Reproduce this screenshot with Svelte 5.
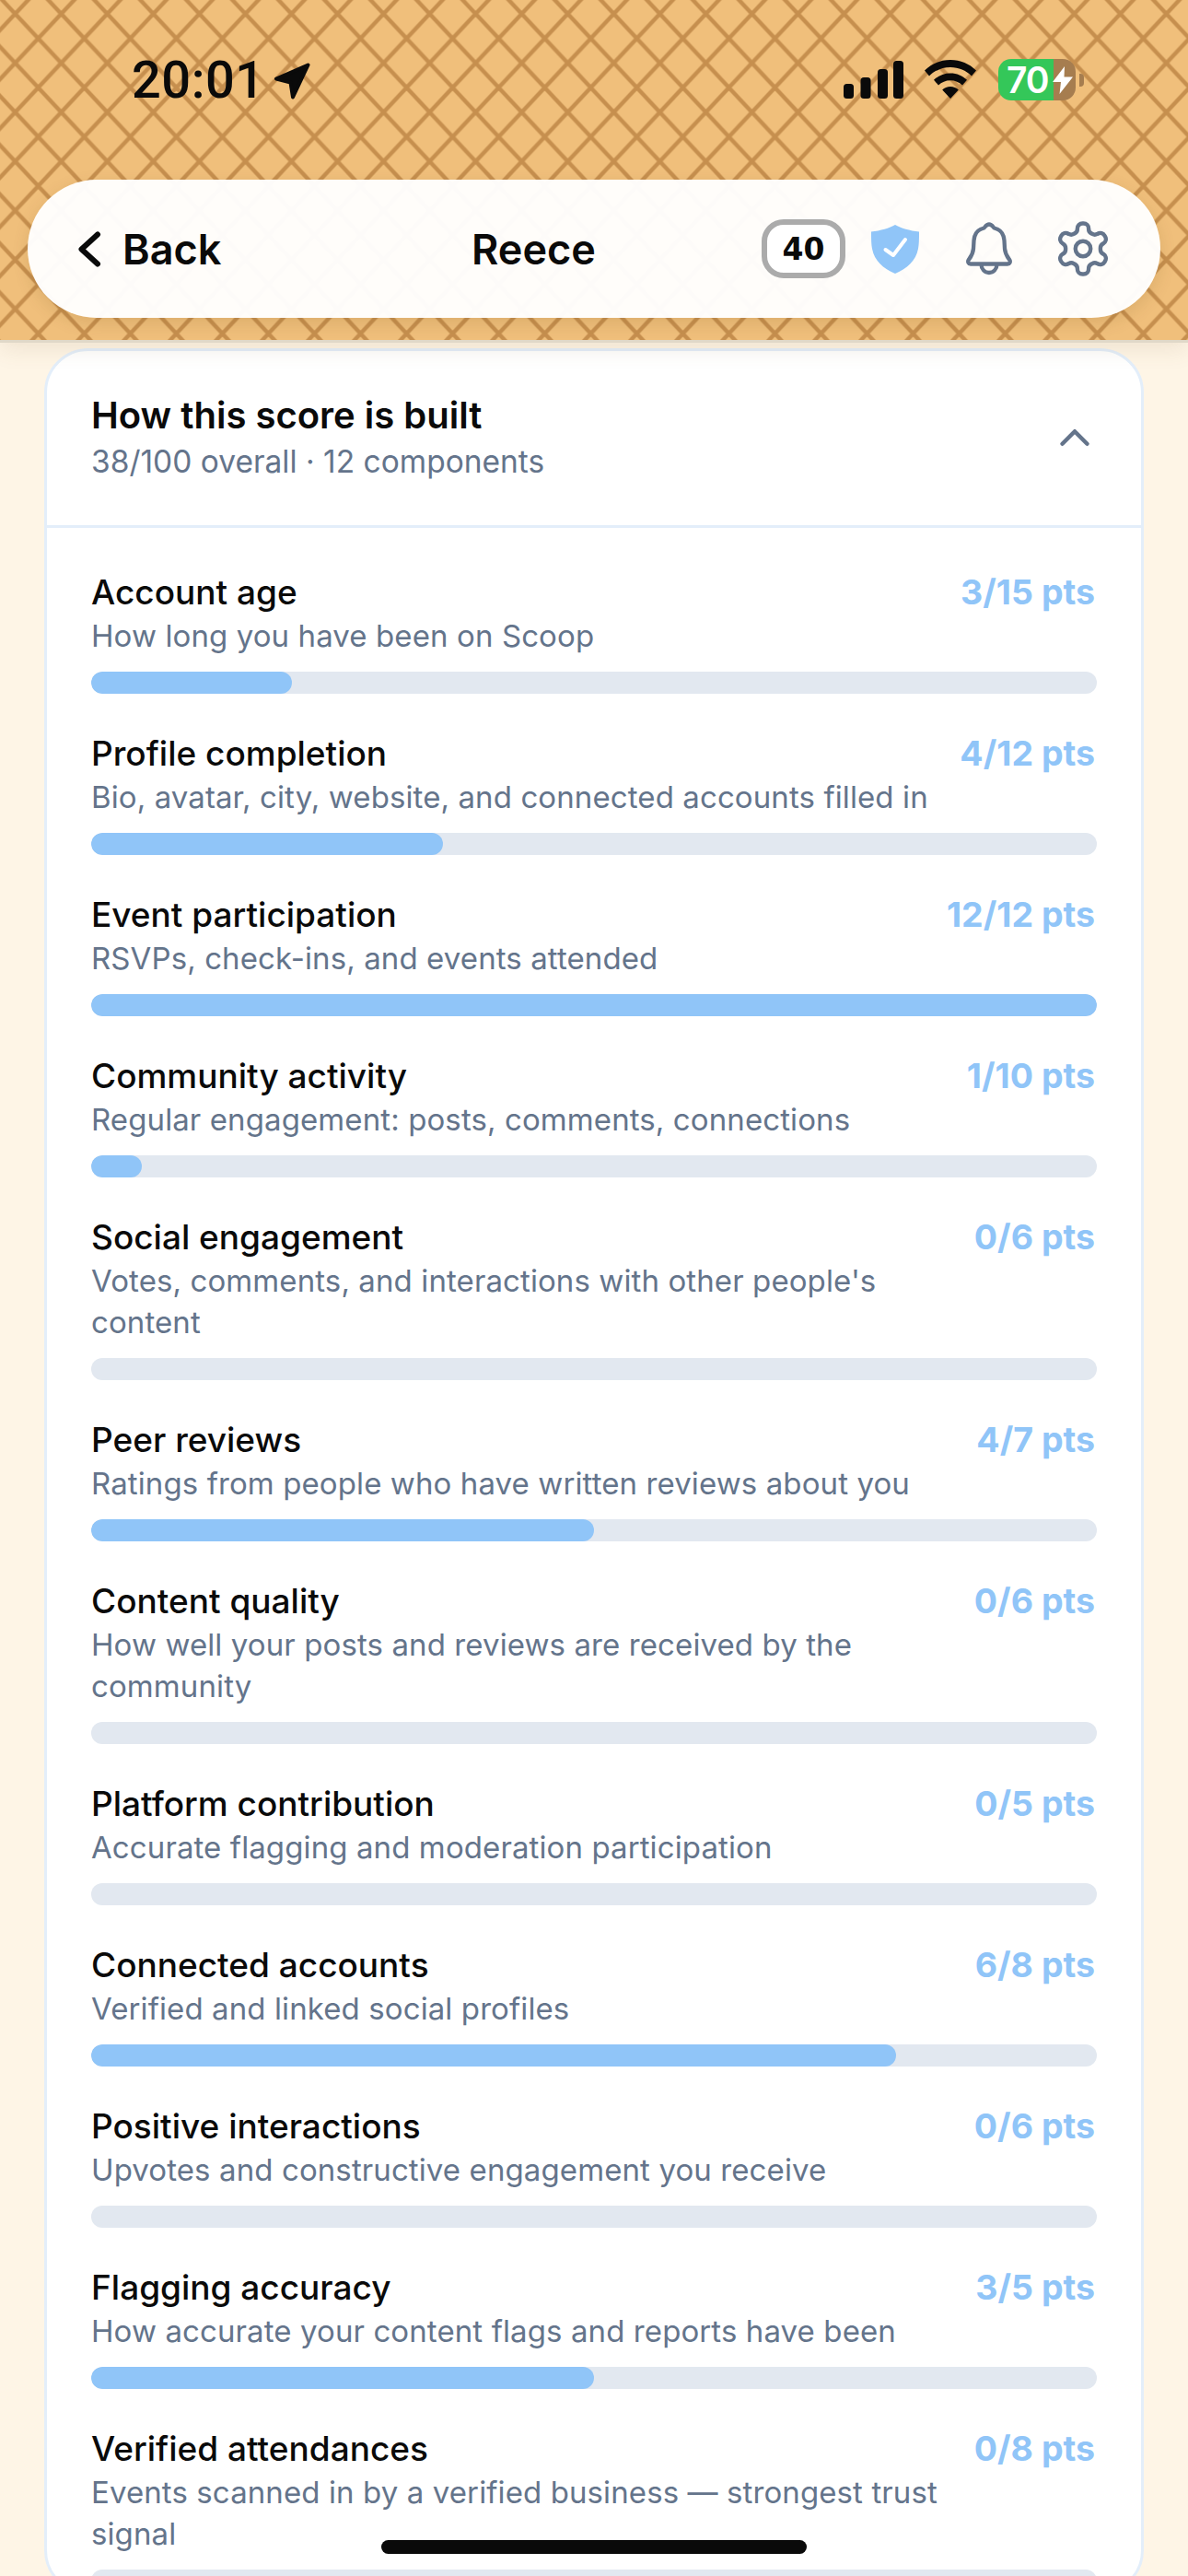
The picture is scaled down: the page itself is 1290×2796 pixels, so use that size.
<script>
  const rows = [
    { t: 'Account age', d: 'How long you have been on Scoop', p: '3/15 pts', w: 20 },
    { t: 'Profile completion', d: 'Bio, avatar, city, website, and connected accounts filled in', p: '4/12 pts', w: 35 },
    { t: 'Event participation', d: 'RSVPs, check-ins, and events attended', p: '12/12 pts', w: 100 },
    { t: 'Community activity', d: 'Regular engagement: posts, comments, connections', p: '1/10 pts', w: 5 },
    { t: 'Social engagement', d: "Votes, comments, and interactions with other people's content", p: '0/6 pts', w: 0 },
    { t: 'Peer reviews', d: 'Ratings from people who have written reviews about you', p: '4/7 pts', w: 50 },
    { t: 'Content quality', d: 'How well your posts and reviews are received by the community', p: '0/6 pts', w: 0 },
    { t: 'Platform contribution', d: 'Accurate flagging and moderation participation', p: '0/5 pts', w: 0 },
    { t: 'Connected accounts', d: 'Verified and linked social profiles', p: '6/8 pts', w: 80 },
    { t: 'Positive interactions', d: 'Upvotes and constructive engagement you receive', p: '0/6 pts', w: 0 },
    { t: 'Flagging accuracy', d: 'How accurate your content flags and reports have been', p: '3/5 pts', w: 50 },
    { t: 'Verified attendances', d: 'Events scanned in by a verified business — strongest trust signal', p: '0/8 pts', w: 0 }
  ];
</script>

<div class="page">
  <header class="top">
    <svg class="waffle" width="1290" height="369" aria-hidden="true">
      <defs>
        <pattern id="wf" x="16.5" y="15" width="50" height="53.4" patternUnits="userSpaceOnUse">
          <path d="M-25 -26.7L75 80.1M75 -26.7L-25 80.1" stroke="#c68f4e" stroke-width="4.500" fill="none" />
        </pattern>
      </defs>
      <rect width="1290" height="369" fill="#f0bf7b" />
      <rect width="1290" height="369" fill="url(#wf)" />
    </svg>

    <div class="status">
      <div class="clock">
        <span class="time">20:01</span>
        <svg class="arrow" width="40" height="40" viewBox="0 0 40 40"><path d="M37.500 2.500L3 17.500L18.500 21.500L21 37.500Z" fill="#0a0a0a" stroke="#0a0a0a" stroke-width="4" stroke-linejoin="round" /></svg>
      </div>
      <div class="indicators">
        <svg class="signal" width="65" height="41" viewBox="0 0 65 41"><rect x="0" y="25" width="11" height="16" rx="3.5" /><rect x="18.5" y="18" width="11" height="23" rx="3.5" /><rect x="37" y="9" width="11" height="32" rx="3.5" /><rect x="54" y="0" width="11" height="41" rx="3.5" /></svg>
        <svg class="wifi" width="56" height="42" viewBox="0 0 56 42"><path d="M28 0C17 0 7.500 4.200 0 11.500L5 17.500C11 11.500 19 8 28 8S45 11.500 51 17.500L56 11.500C48.500 4.200 39 0 28 0Z" /><path d="M28 14.500C21 14.500 14.800 17.200 10 21.800L15 27.600C18.400 24.300 23 22.300 28 22.300S37.600 24.300 41 27.600L46 21.800C41.200 17.200 35 14.500 28 14.500Z" /><path d="M28 29C24.500 29 21.500 30.300 19.200 32.500L28 42L36.800 32.500C34.500 30.300 31.500 29 28 29Z" /></svg>
        <div class="battery">
          <div class="cell">
            <span class="charge">70</span>
            <svg class="bolt" width="22" height="30" viewBox="0 0 22 30"><path d="M13 0L0 17H9L7.500 30L22 11.500H12.500Z" fill="#fff" /></svg>
          </div>
          <span class="nub"></span>
        </div>
      </div>
    </div>

    <nav class="pill">
      <div class="back">
        <svg width="26" height="39" viewBox="0 0 26 39"><path d="M22 3.500L4.500 19.500L22 35.500" fill="none" stroke="#0a0a0a" stroke-width="6" stroke-linecap="round" stroke-linejoin="round" /></svg>
        <span>Back</span>
      </div>
      <div class="name">Reece</div>
      <div class="actions">
        <span class="score">40</span>
        <svg class="shield" width="52" height="53" viewBox="0 0 52 53"><path d="M26 0C20 3.500 10 6.500 0 7.500C0 14 0 21 1 26C3.500 39 13 47.500 26 53C39 47.500 48.500 39 51 26C52 21 52 14 52 7.500C42 6.500 32 3.500 26 0Z" fill="#90c5f8" /><path d="M15.500 27L24 33L37 16" fill="none" stroke="#fff" stroke-width="4" stroke-linecap="round" stroke-linejoin="round" /></svg>
        <svg class="bell" width="50" height="58" viewBox="0 0 50 58"><path d="M25 2.500C22 2.500 21 5 19.500 6.500C13 8 9 13 8.500 20L8 29C7.500 35 5 38 2.800 41C1.500 43 2.500 45.500 5 45.500H45C47.500 45.500 48.500 43 47.200 41C45 38 42.500 35 42 29L41.500 20C41 13 37 8 30.500 6.500C29 5 28 2.500 25 2.500ZM16.500 46A8.500 9 0 0 0 33.500 46" fill="none" stroke="#64748b" stroke-width="4.300" stroke-linecap="round" stroke-linejoin="round" /></svg>
        <svg class="gear" width="66" height="66" viewBox="0 0 24 24"><path d="M12.220 2h-.440a2 2 0 0 0-2 2v.180a2 2 0 0 1-1 1.730l-.430.250a2 2 0 0 1-2 0l-.150-.080a2 2 0 0 0-2.730.730l-.220.380a2 2 0 0 0 .730 2.730l.150.100a2 2 0 0 1 1 1.720v.510a2 2 0 0 1-1 1.740l-.15.090a2 2 0 0 0-.730 2.730l.220.380a2 2 0 0 0 2.730.730l.150-.080a2 2 0 0 1 2 0l.430.250a2 2 0 0 1 1 1.730V20a2 2 0 0 0 2 2h.44a2 2 0 0 0 2-2v-.18a2 2 0 0 1 1-1.730l.43-.25a2 2 0 0 1 2 0l.15.08a2 2 0 0 0 2.730-.73l.22-.39a2 2 0 0 0-.73-2.73l-.15-.08a2 2 0 0 1-1-1.74v-.5a2 2 0 0 1 1-1.74l.15-.09a2 2 0 0 0 .73-2.73l-.22-.38a2 2 0 0 0-2.73-.73l-.15.08a2 2 0 0 1-2 0l-.43-.25a2 2 0 0 1-1-1.73V4a2 2 0 0 0-2-2z" fill="none" stroke="#64748b" stroke-width="1.600" stroke-linecap="round" stroke-linejoin="round" /><circle cx="12" cy="12" r="3" fill="none" stroke="#64748b" stroke-width="1.600" /></svg>
      </div>
    </nav>
  </header>

  <main class="content">
    <section class="card">
      <div class="card-head">
        <div>
          <h2>How this score is built</h2>
          <p>38/100 overall · 12 components</p>
        </div>
        <svg class="chev" width="54" height="54" viewBox="0 0 24 24"><path d="M18 15l-6-6-6 6" fill="none" stroke="#64748b" stroke-width="2" stroke-linecap="round" stroke-linejoin="round" /></svg>
      </div>
      <div class="list">
        {#each rows as r}
          <div class="row">
            <div class="row-top">
              <div class="row-text">
                <h3>{r.t}</h3>
                <p>{r.d}</p>
              </div>
              <span class="pts">{r.p}</span>
            </div>
            <div class="track"><div class="fill" style="width:{r.w}%"></div></div>
          </div>
        {/each}
      </div>
    </section>
  </main>

  <div class="home"></div>
</div>

<style>
  :global(body) { margin: 0; }
  .page {
    position: relative;
    width: 1290px;
    height: 2796px;
    overflow: hidden;
    background: #fef5e6;
    font-family: Inter, "Liberation Sans", sans-serif;
    color: #0a0a0a;
  }
  .top {
    position: relative;
    z-index: 1;
    height: 369px;
    border-bottom: 3px solid #e0d8c8;
    box-shadow: 0 6px 24px rgba(120, 90, 40, 0.12);
    display: flex;
    flex-direction: column;
  }
  .waffle { position: absolute; left: 0; top: 0; }
  .status {
    position: relative;
    height: 195px;
    box-sizing: border-box;
    padding: 64px 113px 0 143px;
    display: flex;
    justify-content: space-between;
    align-items: flex-start;
  }
  .clock { display: flex; align-items: flex-start; gap: 9px; }
  .time {
    font-family: Roboto, sans-serif;
    font-weight: 500;
    font-size: 56px;
    line-height: 46px;
    letter-spacing: 0.5px;
  }
  .arrow { margin-top: 4px; }
  .indicators { display: flex; align-items: flex-start; }
  .signal { fill: #0a0a0a; margin: 2px 23px 0 0; }
  .wifi { fill: #0a0a0a; margin: 1px 24px 0 0; }
  .battery { display: flex; align-items: center; gap: 4px; }
  .cell {
    position: relative;
    box-sizing: border-box;
    width: 84px;
    height: 45px;
    border-radius: 14px;
    background: linear-gradient(90deg, #34c759 0 60px, #a67d4f 60px);
    display: flex;
    align-items: center;
    padding-left: 9px;
    gap: 4px;
    overflow: hidden;
  }
  .charge {
    color: #fff;
    font-weight: 600;
    font-size: 39px;
    line-height: 45px;
    letter-spacing: -1px;
  }
  .nub { width: 5px; height: 14px; border-radius: 0 4px 4px 0; background: #a67d4f; }
  .pill {
    position: relative;
    margin: 0 30px;
    height: 150px;
    border-radius: 75px;
    background: rgba(255, 255, 255, 0.965);
    box-shadow: 0 6px 18px rgba(100, 70, 20, 0.14);
    display: flex;
    align-items: center;
    padding: 0 51px 0 54px;
  }
  .back { display: flex; align-items: center; gap: 23px; font-weight: 600; font-size: 45px; }
  .name { position: absolute; left: 482px; font-weight: 600; font-size: 45px; }
  .actions { margin-left: auto; display: flex; align-items: center; }
  .score {
    box-sizing: border-box;
    width: 91px;
    height: 64px;
    border: 6px solid #ababab;
    border-radius: 24px;
    background: #fff;
    display: flex;
    align-items: center;
    justify-content: center;
    font-family: "DejaVu Sans", sans-serif;
    font-weight: 700;
    font-size: 33px;
  }
  .shield { margin-left: 28px; }
  .bell { margin-left: 51px; }
  .gear { margin-left: 44px; }
  .content { padding: 6px 48px 0; }
  .card {
    border: 3px solid #e3eefa;
    border-radius: 48px;
    background: #fff;
  }
  .card-head {
    display: flex;
    align-items: center;
    justify-content: space-between;
    padding: 45px 48px 44px;
    border-bottom: 3px solid #e3eefa;
  }
  .chev { margin: -3px -3px 0 0; }
  h2 { margin: 0; font-size: 40px; line-height: 50px; font-weight: 600; }
  .card-head p { margin: 0; font-size: 33.5px; line-height: 50px; color: #64748b; }
  .list { padding: 45px 48px 0; display: flex; flex-direction: column; gap: 40px; }
  .row-top { display: flex; justify-content: space-between; align-items: flex-start; gap: 24px; }
  .row-text { min-width: 0; }
  h3 { margin: 0; font-size: 37px; line-height: 50px; font-weight: 520; }
  .row-text p { margin: 0; font-size: 33px; line-height: 45px; letter-spacing: 0.1px; color: #64748b; }
  .pts { color: #90c5f8; font-size: 37.5px; line-height: 50px; font-weight: 680; white-space: nowrap; padding-right: 2px; }
  .track { height: 24px; margin-top: 16px; border-radius: 12px; background: #e2e8f0; overflow: hidden; }
  .fill { height: 100%; border-radius: 12px; background: #90c5f8; }
  .home {
    position: absolute;
    left: 414px;
    top: 2757px;
    width: 462px;
    height: 15px;
    border-radius: 8px;
    background: #0a0a0a;
    z-index: 2;
  }
</style>
